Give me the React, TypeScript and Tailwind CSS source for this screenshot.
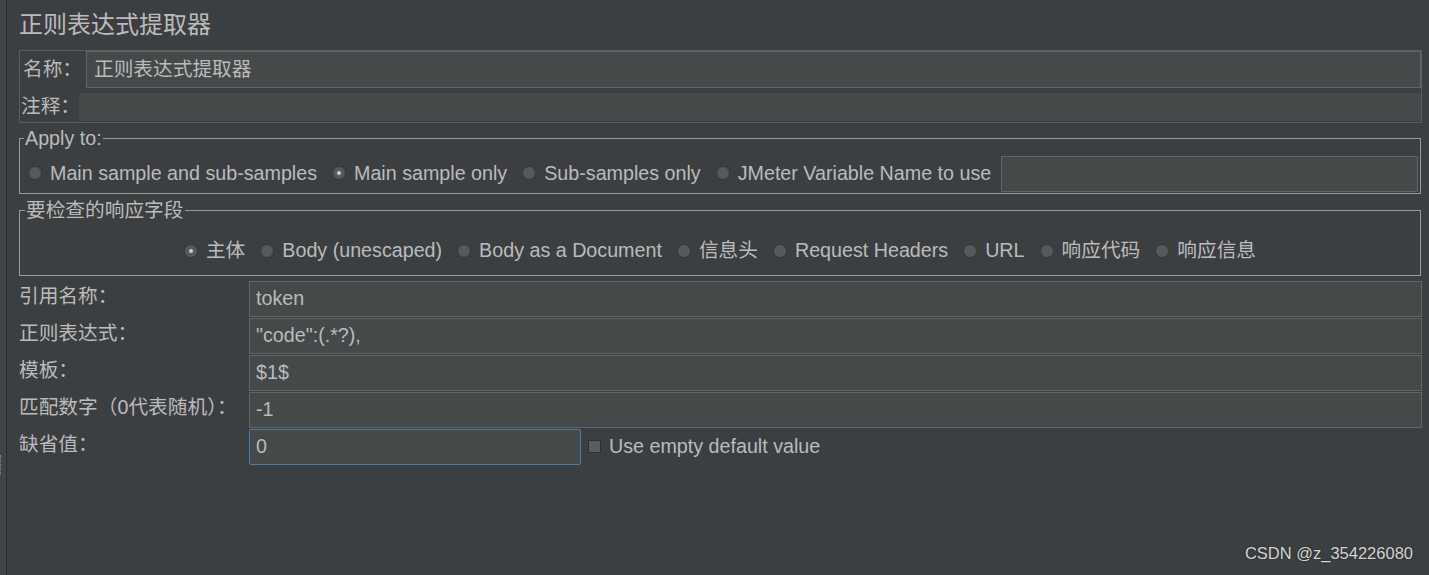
import React from 'react';

// Darcula-like palette used by the JMeter panel
const FONT = { fontFamily: '"Liberation Sans", "Noto Sans CJK SC", sans-serif' };

function Radio({ label, checked = false }: { label: string; checked?: boolean }) {
  return (
    <label className="flex items-center gap-[8px] whitespace-nowrap">
      <span className="w-[14px] h-[14px] rounded-full bg-[#56595b] border border-[#35383a] flex items-center justify-center shrink-0">
        {checked && <span className="w-[4px] h-[4px] rounded-full bg-[#cccccc]" />}
      </span>
      <span>{label}</span>
    </label>
  );
}

function FormRow({ label, value, focused = false }: { label: string; value: string; focused?: boolean }) {
  return (
    <div className="flex items-center h-[36px]">
      <div className="w-[230px] shrink-0 -mt-[4px] whitespace-nowrap">{label}</div>
      {focused ? (
        <div className="flex items-center h-full">
          <div className="w-[332px] h-full bg-[#45494a] border-[1.5px] border-[#4a7cb0] rounded-[2px] flex items-center pl-[6px]">
            {value}
          </div>
          <div className="flex items-center gap-[8px] ml-[7px]">
            <span className="w-[13px] h-[13px] bg-[#5a5d5f] border border-[#2f3133]" />
            <span>Use empty default value</span>
          </div>
        </div>
      ) : (
        <div className="flex-1 h-full bg-[#45494a] border border-[#646464] flex items-center pl-[6px]">{value}</div>
      )}
    </div>
  );
}

export default function App() {
  return (
    <div className="relative w-full h-[575px] bg-[#3c3f41] text-[#bbbbbb] text-[19.7px] flex overflow-hidden" style={FONT}>
      {/* left splitter strip */}
      <div className="w-[6px] bg-[#414446] flex flex-col justify-end pb-[100px]">
        <div className="h-[20px] w-[3px] border-l border-dotted border-[#8a8a8a]" />
      </div>
      <div className="w-px bg-[#2b2b2b]" />

      <main className="flex-1 pl-[12px] pr-[7px] flex flex-col">
        <div className="h-[50px] pt-[11px] text-[24px] leading-[28px]">正则表达式提取器</div>

        {/* name & comment */}
        <div className="border border-[#5a5d5f] pb-px">
          <div className="flex items-center h-[37px]">
            <div className="w-[66px] pl-[3px] shrink-0 whitespace-nowrap">名称：</div>
            <div className="flex-1 h-full bg-[#45494a] border border-[#646464] flex items-center pl-[7px]">正则表达式提取器</div>
          </div>
          <div className="flex items-center h-[28px] mt-[5px]">
            <div className="w-[59px] pl-[1px] shrink-0 whitespace-nowrap">注释：</div>
            <div className="flex-1 h-full bg-[#45494a]" />
          </div>
        </div>

        {/* Apply to */}
        <fieldset className="mt-[4px] mr-[1px] border border-[#9a9a9a] pl-[8px] pr-[2px] pt-[6px] pb-px">
          <legend className="-ml-[4px] px-[1px] leading-[22px]">Apply to:</legend>
          <div className="flex items-center h-[37px] gap-[15px]">
            <Radio label="Main sample and sub-samples" />
            <Radio label="Main sample only" checked />
            <Radio label="Sub-samples only" />
            <Radio label="JMeter Variable Name to use" />
            <div className="flex-1 h-[36px] bg-[#45494a] border border-[#646464] -ml-[5px]" />
          </div>
        </fieldset>

        {/* field to check */}
        <fieldset className="mt-[5px] mr-[1px] border border-[#9a9a9a] pt-[6px]">
          <legend className="ml-[5px] px-[1px] leading-[22px]">要检查的响应字段</legend>
          <div className="flex items-center justify-center h-[48px] gap-[15px]">
            <Radio label="主体" checked />
            <Radio label="Body (unescaped)" />
            <Radio label="Body as a Document" />
            <Radio label="信息头" />
            <Radio label="Request Headers" />
            <Radio label="URL" />
            <Radio label="响应代码" />
            <Radio label="响应信息" />
          </div>
        </fieldset>

        <div className="mt-[5px] flex flex-col gap-[1px]">
          <FormRow label="引用名称：" value="token" />
          <FormRow label="正则表达式：" value={'"code":(.*?),'} />
          <FormRow label="模板：" value="$1$" />
          <FormRow label="匹配数字（0代表随机）：" value="-1" />
          <FormRow label="缺省值：" value="0" focused />
        </div>
      </main>

      <div className="absolute right-[16px] bottom-[9px] text-[16.5px] text-[#d4d4d4] [text-shadow:0_0_2px_#222]">CSDN @z_354226080</div>
    </div>
  );
}
